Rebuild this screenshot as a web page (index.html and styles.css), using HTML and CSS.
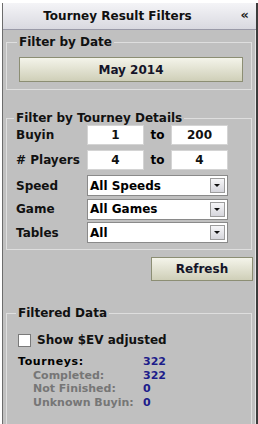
FILE: index.html
```html
<!DOCTYPE html>
<html lang="en">
<head>
    <meta charset="UTF-8">
    <title>Tourney Result Filters</title>
    <link rel="stylesheet" href="styles.css">
</head>
<body>
    <div class="panel">
        <div class="panel-header">
            <span class="title">Tourney Result Filters</span>
            <span class="collapse">&laquo;</span>
        </div>

        <!-- Date filter -->
        <fieldset class="group date-group">
            <legend>Filter by Date</legend>
            <button class="btn date-btn">May 2014</button>
        </fieldset>

        <!-- Tourney details -->
        <fieldset class="group details-group">
            <legend>Filter by Tourney Details</legend>
            <div class="row">
                <span class="label">Buyin</span>
                <input class="num" type="text" value="1">
                <span class="to">to</span>
                <input class="num" type="text" value="200">
            </div>
            <div class="row">
                <span class="label"># Players</span>
                <input class="num" type="text" value="4">
                <span class="to">to</span>
                <input class="num" type="text" value="4">
            </div>
            <div class="row select-row">
                <span class="label">Speed</span>
                <div class="select"><span>All Speeds</span><span class="arrow"></span></div>
            </div>
            <div class="row select-row">
                <span class="label">Game</span>
                <div class="select"><span>All Games</span><span class="arrow"></span></div>
            </div>
            <div class="row select-row">
                <span class="label">Tables</span>
                <div class="select"><span>All</span><span class="arrow"></span></div>
            </div>
        </fieldset>

        <div class="actions">
            <button class="btn refresh-btn">Refresh</button>
        </div>

        <!-- Results -->
        <fieldset class="group data-group">
            <legend>Filtered Data</legend>
            <label class="check"><span class="box"></span>Show $EV adjusted</label>
            <div class="stats">
                <div class="stat main"><span class="name">Tourneys:</span><span class="val">322</span></div>
                <div class="stat sub"><span class="name">Completed:</span><span class="val">322</span></div>
                <div class="stat sub"><span class="name">Not Finished:</span><span class="val">0</span></div>
                <div class="stat sub"><span class="name">Unknown Buyin:</span><span class="val">0</span></div>
            </div>
        </fieldset>
    </div>
</body>
</html>
```
FILE: styles.css
```css
html, body {
    margin: 0;
    height: 100%;
    background-color: #ffffff;
}

body {
    font-family: "DejaVu Sans", Verdana, sans-serif;
    font-size: 11px;
    font-weight: bold;
    color: #000;
    overflow: hidden;
}

.panel {
    margin: 3px 0 0 2px;
    height: 421px;
    box-sizing: border-box;
    overflow: hidden;
    background-color: #c0c0c0;
    border-left: 1px solid #6c6c6c;
    border-right: 2px solid #3c3c3c;
    box-shadow: inset -1px 0 0 #e4e4e4;
}

.panel-header {
    height: 27px;
    box-sizing: border-box;
    margin-left: -1px;
    padding-right: 24px;
    background: linear-gradient(#f4f4f7, #d9d9e0);
    border-bottom: 1px solid #9a9aa8;
    border-left: 1px solid #e8e8ec;
    display: flex;
    align-items: center;
    justify-content: center;
    position: relative;
}

.title {
    font-size: 12px;
    color: #101010;
}

.collapse {
    position: absolute;
    right: 7px;
    top: 4px;
    font-size: 13px;
    color: #202020;
}

.group {
    margin: 0 4px 0 3px;
    padding: 0 8px 0 9px;
    border: 1px solid #dedede;
}

.group legend {
    padding: 0 2px;
    margin-left: -2px;
    height: 14px;
    line-height: 14px;
    font-size: 12px;
    color: #111;
}

.date-group {
    margin-top: 5px;
    padding: 8px 8px 7px 12px;
}

.btn {
    font-family: inherit;
    font-weight: bold;
    font-size: 12px;
    color: #141428;
    background: linear-gradient(#f4f4ea, #cfcfb8);
    border: 1px solid #8c8e74;
    cursor: pointer;
}

.date-btn {
    display: block;
    width: 100%;
    height: 25px;
}

.details-group {
    margin-top: 21px;
    padding-top: 0;
    padding-bottom: 6px;
}

.row {
    display: flex;
    align-items: center;
    height: 20px;
    margin-bottom: 5px;
}

.select-row {
    height: 21px;
    margin-bottom: 2.5px;
}

.select-row:last-child {
    margin-bottom: 0;
}

.label {
    width: 71px;
    font-size: 12px;
    color: #111;
}

.num {
    width: 57px;
    height: 20px;
    box-sizing: border-box;
    border: 1px solid #d4d4d4;
    background: #fff;
    text-align: center;
    font-family: inherit;
    font-weight: bold;
    font-size: 12px;
    color: #111;
    padding: 0;
    outline: none;
}

.to {
    width: 27px;
    text-align: center;
    font-size: 12px;
}

.select {
    width: 141px;
    height: 21px;
    box-sizing: border-box;
    border: 1px solid #8a8a8a;
    background: #fff;
    display: flex;
    align-items: center;
    justify-content: space-between;
    padding-left: 2px;
    font-size: 12px;
}

.arrow {
    width: 15px;
    height: 15px;
    margin-right: 2px;
    box-sizing: border-box;
    border: 1px solid #9c9c9c;
    background: linear-gradient(#f6f6f8, #d6d6dc);
    position: relative;
}

.arrow::after {
    content: "";
    position: absolute;
    left: 3px;
    top: 5px;
    border-left: 3px solid transparent;
    border-right: 3px solid transparent;
    border-top: 3px solid #111;
}

.actions {
    display: flex;
    justify-content: flex-end;
    padding: 7px 3px 0 0;
}

.refresh-btn {
    width: 102px;
    height: 24px;
}

.data-group {
    margin-top: 25px;
    padding: 13px 8px 40px 11px;
    border-bottom: none;
}

.check {
    display: flex;
    align-items: center;
    height: 14px;
    font-size: 12px;
    color: #111;
}

.box {
    width: 13px;
    height: 13px;
    box-sizing: border-box;
    border: 1px solid #7a7a7a;
    background: #fff;
    margin-right: 6px;
}

.stats {
    margin-top: 8px;
}

.stat {
    display: flex;
    height: 13.7px;
    line-height: 13.7px;
}

.stat .name {
    width: 125px;
}

.stat.main .name {
    letter-spacing: 0.6px;
}

.stat.sub .name {
    padding-left: 15px;
    width: 110px;
    color: #767676;
}

.stat .val {
    color: #1c1c8a;
}
```
